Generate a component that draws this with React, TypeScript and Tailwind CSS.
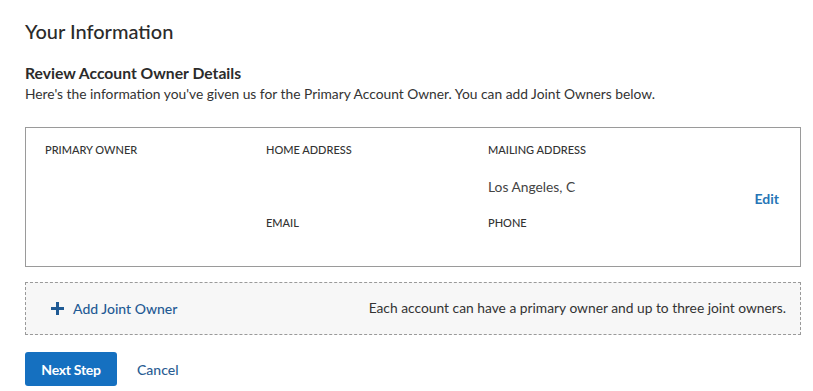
export default function App() {
  const label = 'text-[11px] leading-[14px] font-medium text-[#333] uppercase';
  const value = 'text-[13.8px] leading-[20px] text-[#444]';

  return (
    <div className="min-h-[391px] w-[813px] bg-white font-['Lato','Liberation_Sans',sans-serif] text-[#333]">
      <div className="pl-[25px] pr-[12px] pt-[18px]">
        <h1 className="text-[20px] leading-[26px] font-medium text-[#2b2b2b]">Your Information</h1>

        <h2 className="mt-[19px] text-[15.7px] leading-[20px] font-bold text-[#2b2b2b]">
          Review Account Owner Details
        </h2>
        <p className="mt-[2px] text-[13.8px] leading-[18px] text-[#333]">
          Here's the information you've given us for the Primary Account Owner. You can add Joint Owners below.
        </p>

        {/* owner card */}
        <div className="mt-[24px] flex h-[140px] border border-[#9a9a9a] pl-[19px] pr-[21px] pt-[15px]">
          <div className="w-[221px]">
            <div className={label}>Primary Owner</div>
          </div>
          <div className="w-[222px]">
            <div className={label}>Home Address</div>
            <div className={value}>&nbsp;</div>
            <div className={value}>&nbsp;</div>
            <div className={`${label} mt-[19px]`}>Email</div>
            <div className={value}>&nbsp;</div>
          </div>
          <div className="flex-1">
            <div className={label}>Mailing Address</div>
            <div className={value}>&nbsp;</div>
            <div className={value}>Los Angeles, C</div>
            <div className={`${label} mt-[19px]`}>Phone</div>
            <div className={value}>&nbsp;</div>
          </div>
          <div className="flex items-center pb-[12px]">
            <button className="text-[14px] font-bold text-[#2775b6]">Edit</button>
          </div>
        </div>

        {/* joint owner */}
        <div className="mt-[15px] flex h-[53px] items-center justify-between border border-dashed border-[#9a9a9a] bg-[#f7f7f7] pl-[24px] pr-[14px]">
          <button className="flex items-center gap-[8px] text-[14px] font-medium text-[#1f5a94]">
            <svg width="15" height="15" viewBox="0 0 15 15" aria-hidden="true">
              <path d="M7.5 1v13M1 7.5h13" stroke="#1f5a94" strokeWidth="3" />
            </svg>
            Add Joint Owner
          </button>
          <span className="text-[13.8px] text-[#333]">
            Each account can have a primary owner and up to three joint owners.
          </span>
        </div>

        <div className="mt-[17px] flex items-center gap-[20px]">
          <button className="h-[34px] w-[92px] rounded-[3px] bg-[#1570c0] text-[14px] font-bold tracking-[-0.02em] text-white">
            Next Step
          </button>
          <button className="text-[14px] font-medium text-[#2a5d93]">Cancel</button>
        </div>
      </div>
    </div>
  );
}
